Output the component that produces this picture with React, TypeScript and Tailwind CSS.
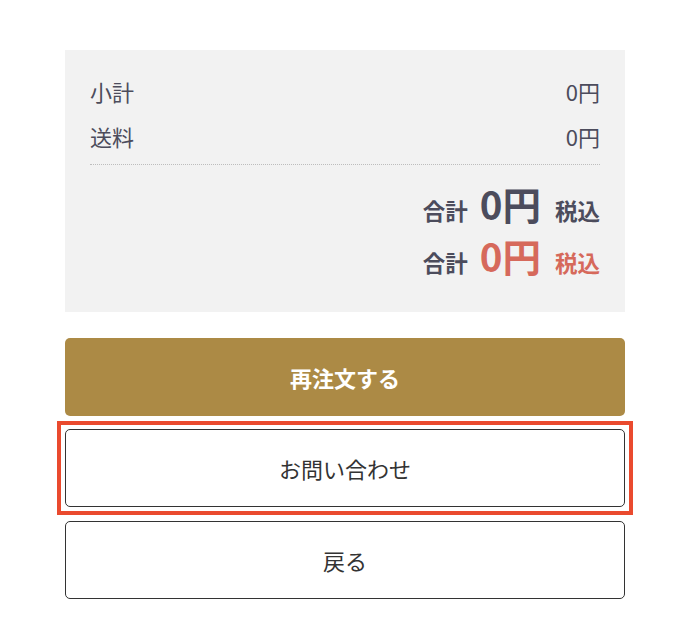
import React from "react";

const font = { fontFamily: '"Noto Sans CJK JP", "Noto Sans", sans-serif' };

export default function App() {
  return (
    <div className="w-[680px] h-[640px] bg-white pt-[50px]" style={font}>
      <div className="ml-[65px] w-[560px]">
        <div className="bg-[#f2f2f2] px-[25px] pt-[22px] pb-[31px] text-[#4c4c5c]">
          <div className="flex justify-between text-[22px] leading-[38px]">
            <span>小計</span>
            <span>0円</span>
          </div>
          <div className="flex justify-between text-[22px] leading-[38px] mt-[7px]">
            <span>送料</span>
            <span>0円</span>
          </div>
          <div className="border-t border-dotted border-[#bdbdbd] mt-[9px]" />
          <div className="mt-[12px] flex flex-col items-end">
            <div className="flex items-baseline h-[52px] leading-[52px] font-bold">
              <span className="text-[22.5px]">合計</span>
              <span className="text-[38.5px] ml-[12px]">0円</span>
              <span className="text-[22.5px] ml-[14px]">税込</span>
            </div>
            <div className="flex items-baseline h-[52px] leading-[52px] font-bold">
              <span className="text-[22.5px]">合計</span>
              <span className="text-[38.5px] ml-[12px] text-[#d6695b]">0円</span>
              <span className="text-[22.5px] ml-[14px] text-[#d6695b]">税込</span>
            </div>
          </div>
        </div>
        <button className="mt-[26px] w-full h-[78px] rounded-[5px] bg-[#ac8a45] text-white font-bold text-[22px] flex items-center justify-center">
          再注文する
        </button>
        <div className="mt-[5px] mx-[-8px] border-4 border-[#ea4a2e] p-[4px]">
          <button className="w-full h-[78px] rounded-[5px] border border-[#333] bg-white text-[#333] text-[22px] flex items-center justify-center">
            お問い合わせ
          </button>
        </div>
        <button className="mt-[6px] w-full h-[78px] rounded-[5px] border border-[#333] bg-white text-[#333] text-[22px] flex items-center justify-center">
          戻る
        </button>
      </div>
    </div>
  );
}
